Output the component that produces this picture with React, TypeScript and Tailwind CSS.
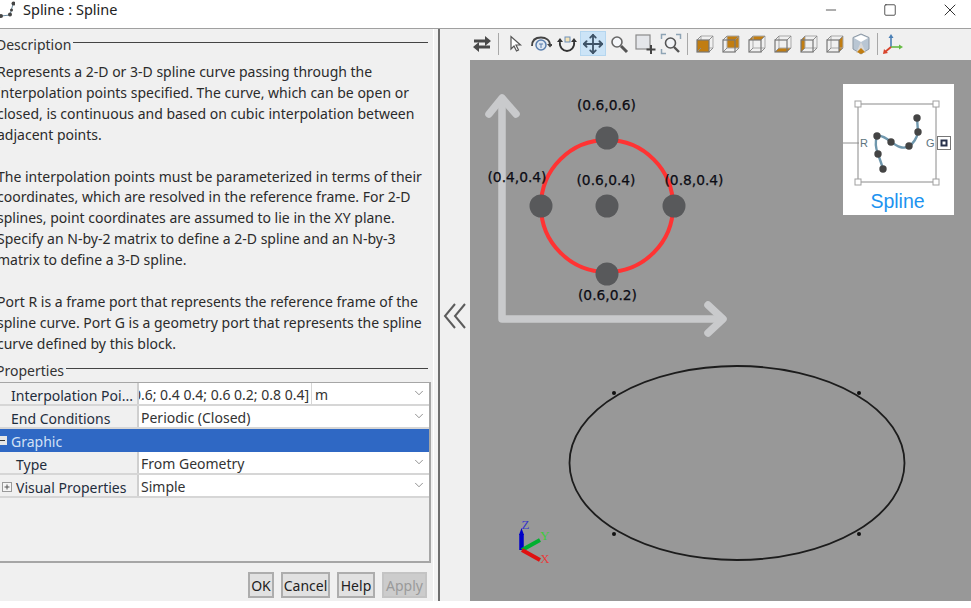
import React from 'react';
import { ChevronDown, Minus, Move, Square, X } from 'lucide-react';

const FONT = "font-['Noto_Sans',sans-serif]";
const ORANGE = '#c17d11';

const Chevron = () => <ChevronDown size={14} strokeWidth={1} className="text-[#444] shrink-0" />;

const SectionHeader = ({ title, mt }: { title: string; mt: string }) => (
  <div className={`flex items-center gap-[2px] h-[20px] -ml-[4px] ${mt}`}>
    <span className="text-[#333] pt-[2px]">{title}</span>
    <div className="flex-1 h-[1px] bg-[#444] -mt-[2px]" />
  </div>
);

const PropRow = ({ label, indent, value, unit, icon }: { label: string; indent: string; value: string; unit?: string; icon?: React.ReactNode }) => (
  <div className="flex h-[23px] border-b-2 border-[#d6d6d6]">
    <div className={`w-[139px] shrink-0 flex items-center pt-[4px] border-r-2 border-[#cfcfcf] text-[#1f2d3d] ${indent}`}>
      {icon}
      <span className="whitespace-nowrap">{label}</span>
    </div>
    <div className="flex-1 min-w-0 bg-white flex items-center text-[#333]">
      {unit ? (
        <>
          <div className="w-[173px] pl-[2px] pr-[2px] pt-[3px] flex justify-end overflow-hidden whitespace-nowrap border-r border-[#d6d6d6] h-full items-center">{value}</div>
          <span className="flex-1 pl-[3px] pt-[3px]">{unit}</span>
        </>
      ) : (
        <span className="flex-1 pl-[2px] pt-[3px]">{value}</span>
      )}
      <div className="pr-[3px]"><Chevron /></div>
    </div>
  </div>
);

const DlgButton = ({ label, w, disabled }: { label: string; w: string; disabled?: boolean }) => (
  <div className={`h-[26px] ${w} pt-[2px] flex items-center justify-center border-2 ${disabled ? 'bg-[#cccccc] border-[#c4c4c4] text-[#9a9a9a]' : 'bg-[#e1e1e1] border-[#adadad] text-[#222]'}`}>
    {label}
  </div>
);

const Cube = ({ face }: { face: string }) => (
  <svg width="20" height="20" viewBox="0 0 20 20" fill="none">
    {face === 'back' && <rect x="6" y="2" width="12" height="12" fill={ORANGE} />}
    {face === 'top' && <path d="M2 6 6 2H18L14 6Z" fill={ORANGE} />}
    {face === 'bottom' && <path d="M2 18 6 14H18L14 18Z" fill={ORANGE} />}
    {face === 'left' && <path d="M2 6 6 2V14L2 18Z" fill={ORANGE} />}
    {face === 'right' && <path d="M14 6 18 2V14L14 18Z" fill={ORANGE} />}
    <path d="M6 2H18V14M6 2V14H18" stroke="#a9a9a9" strokeWidth="1" />
    {face === 'front' && <rect x="2" y="6" width="12" height="12" fill={ORANGE} />}
    <path d="M2 6 6 2M14 6 18 2M14 18 18 14M2 18 6 14" stroke="#8d8d8d" strokeWidth="1" />
    <rect x="2" y="6" width="12" height="12" stroke="#777" strokeWidth="1.2" />
  </svg>
);

const ToolSlot = ({ children, active }: { children: React.ReactNode; active?: boolean }) => (
  <div className={`w-[26px] h-[25px] flex items-center justify-center shrink-0 ${active ? 'bg-[#cce4f7] border border-[#b5d6ef]' : ''}`}>{children}</div>
);

const Sep = () => <div className="w-[1px] h-[22px] bg-[#a8a8a8] shrink-0" />;

const Toolbar = () => (
  <div className="h-[31px] pb-[2px] flex items-center pl-[29px] bg-[#f0f0f0] shrink-0">
    <ToolSlot>
      <svg width="20" height="20" viewBox="0 0 20 20" fill="#4a4a4a">
        <path d="M2 5.5h11V2l6 5-6 5V8.500H2Z" />
        <path d="M18 11.500H7V8L1 13l6 5v-3.500h11Z" />
      </svg>
    </ToolSlot>
    <div className="w-[3px]" />
    <Sep />
    <div className="w-[3px]" />
    <ToolSlot>
      <svg width="18" height="18" viewBox="0 0 18 18" fill="#fff" stroke="#555" strokeWidth="1.2">
        <path d="M5 1.500V14L8 11l2.500 5 2-1L10 10h4.500Z" />
      </svg>
    </ToolSlot>
    <ToolSlot>
      <svg width="22" height="20" viewBox="0 0 22 20" fill="none">
        <path d="M2 12C2 6 6 3.500 11 3.500S20 6 20 11" stroke="#444" strokeWidth="1.800" />
        <path d="M17 10h6l-3 3.500Z" fill="#444" />
        <circle cx="11" cy="11" r="5" stroke="#5a7fae" strokeWidth="1.500" fill="#dfe8f3" />
        <path d="M9 10h4M11 10v4" stroke="#5a7fae" strokeWidth="1" />
      </svg>
    </ToolSlot>
    <ToolSlot>
      <svg width="22" height="20" viewBox="0 0 22 20" fill="none">
        <path d="M4 8C3 13 7 17 11 17s8-4 7-9" stroke="#333" strokeWidth="1.800" />
        <path d="M1 8h6L4 4Z M15 8h6l-3-4Z" fill="#333" />
        <rect x="9" y="3" width="5" height="5" fill="#f4e2b5" stroke="#6d8fba" strokeWidth="1" />
      </svg>
    </ToolSlot>
    <ToolSlot active>
      <Move size={22} strokeWidth={2} className="text-[#3f5468]" />
    </ToolSlot>
    <ToolSlot>
      <svg width="20" height="20" viewBox="0 0 20 20" fill="none">
        <circle cx="8" cy="8" r="5" fill="#f5f7fa" stroke="#666" strokeWidth="1.600" />
        <path d="M12 12l6 6" stroke="#555" strokeWidth="3" />
      </svg>
    </ToolSlot>
    <ToolSlot>
      <svg width="22" height="22" viewBox="0 0 22 22" fill="none">
        <rect x="2" y="2" width="14" height="14" fill="#e4e6ea" stroke="#8a8a8a" strokeWidth="1.200" />
        <path d="M17 12v9M12.500 16.500h9" stroke="#444" strokeWidth="2" />
      </svg>
    </ToolSlot>
    <ToolSlot>
      <svg width="22" height="22" viewBox="0 0 22 22" fill="none">
        <circle cx="10.500" cy="10" r="5" fill="#f2f4f7" stroke="#555" strokeWidth="1.600" />
        <path d="M14 14l5 5" stroke="#555" strokeWidth="2.400" />
        <path d="M1.500 6V1.500H6M16 1.500h4.500V6M1.500 16v4.500H6" stroke="#8ea4b5" strokeWidth="1.500" />
      </svg>
    </ToolSlot>
    <div className="w-[3px]" />
    <Sep />
    <div className="w-[4px]" />
    {['front', 'back', 'top', 'bottom', 'left', 'right'].map(face => (
      <ToolSlot key={face}><Cube face={face} /></ToolSlot>
    ))}
    <ToolSlot>
      <svg width="20" height="22" viewBox="0 0 20 22" fill="none">
        <path d="M10 1 18 4.500V16L10 21 2 16V4.500Z" fill="#b9c6d3" stroke="#8d99a5" strokeWidth="1" />
        <path d="M10 2 17 5 10 9 3 5Z" fill="#fff" />
        <path d="M10 9 5 20H15Z" fill="#d8d8d8" />
        <path d="M10 15 6 19 10 21 14 19Z" fill={ORANGE} />
      </svg>
    </ToolSlot>
    <div className="w-[3px]" />
    <Sep />
    <div className="w-[2px]" />
    <ToolSlot>
      <svg width="22" height="22" viewBox="0 0 22 22" fill="none">
        <path d="M9 14V4" stroke="#4a7fb5" strokeWidth="1.600" />
        <path d="M9 1 6.500 5h5Z" fill="#4a7fb5" />
        <path d="M9 14H18" stroke="#66bb44" strokeWidth="1.600" />
        <path d="M21 14 17 11.500v5Z" fill="#66bb44" />
        <path d="M9 14 3 19" stroke="#d8442c" strokeWidth="1.800" />
        <path d="M1 21 2 16 6 20Z" fill="#d8442c" />
      </svg>
    </ToolSlot>
  </div>
);

const SceneDrawing = () => (
  <svg className="block w-full h-full" viewBox="470 60 501 541" fill="none">
    {/* white reference axes */}
    <g stroke="#c9cacc" strokeWidth="7.500" strokeLinecap="round" strokeLinejoin="round">
      <path d="M502 100V319H722" />
      <path d="M489 114 502 98 516 114" />
      <path d="M708 305 723 319 708 333" />
    </g>
    <circle cx="607" cy="206" r="66" stroke="#ff3333" strokeWidth="4" />
    <g fill="#58595b">
      <circle cx="607" cy="138" r="11.500" />
      <circle cx="541" cy="206" r="11.500" />
      <circle cx="607" cy="206" r="11.500" />
      <circle cx="674" cy="206" r="11.500" />
      <circle cx="607" cy="274" r="11.500" />
    </g>
    <g fill="#0c0c14" fontFamily="'DejaVu Sans', sans-serif" fontSize="13.800" textAnchor="middle" stroke="#0c0c14" strokeWidth="0.250">
      <text x="606.500" y="110">(0.6,0.6)</text>
      <text x="517" y="182">(0.4,0.4)</text>
      <text x="606" y="185">(0.6,0.4)</text>
      <text x="694" y="185">(0.8,0.4)</text>
      <text x="607.500" y="300">(0.6,0.2)</text>
    </g>
    {/* spline result */}
    <ellipse cx="737" cy="463" rx="167.500" ry="97" stroke="#1c1c1c" strokeWidth="1.800" />
    <g fill="#111">
      <circle cx="614" cy="393" r="2" />
      <circle cx="859" cy="393" r="2" />
      <circle cx="614" cy="534" r="2" />
      <circle cx="859" cy="534" r="2" />
    </g>
    {/* triad */}
    <path d="M521.500 550V534" stroke="#0000c8" strokeWidth="4.500" />
    <path d="M521.500 528 519 535h5Z" fill="#0000c8" />
    <path d="M522 550 540 540" stroke="#00b030" strokeWidth="4" />
    <path d="M522 550 540 560" stroke="#e01010" strokeWidth="4" />
    <g fontFamily="'Liberation Serif', serif" fontSize="13" textAnchor="middle">
      <text x="525.500" y="529" fill="#3838c8">Z</text>
      <text x="545" y="540" fill="#3ccc3c">Y</text>
      <text x="545" y="563" fill="#e83c3c">X</text>
    </g>
  </svg>
);

const BlockThumb = () => (
  <div className="absolute left-[373px] top-[24px] w-[111px] h-[131px] bg-white flex flex-col items-center">
    <svg width="111" height="104" viewBox="843 84 111 104" fill="none">
      <path d="M843 143H859" stroke="#909090" strokeWidth="1" />
      <rect x="858" y="104" width="78" height="78" stroke="#8a8a8a" strokeWidth="1" />
      <g fill="#fff" stroke="#a0a0a0" strokeWidth="1">
        <rect x="855" y="101" width="6" height="6" />
        <rect x="933" y="101" width="6" height="6" />
        <rect x="855" y="179" width="6" height="6" />
        <rect x="933" y="179" width="6" height="6" />
      </g>
      <path d="M917 118 918 132C917 138 913 144 909 146 903 150 897 146 891 142 886 138 881 135 877 136 875 142 876 149 878 154 880 160 882 165 883 169" stroke="#6f97ad" strokeWidth="2.400" />
      <g fill="#444">
        <circle cx="917" cy="118" r="3.700" />
        <circle cx="918" cy="132" r="3.700" />
        <circle cx="909" cy="146" r="3.700" />
        <circle cx="891" cy="142" r="3.700" />
        <circle cx="877" cy="136" r="3.700" />
        <circle cx="878" cy="154" r="3.700" />
        <circle cx="883" cy="169" r="3.700" />
      </g>
      <g fontFamily="'Liberation Sans', sans-serif" fontSize="11" fill="#5d7480">
        <text x="860" y="147">R</text>
        <text x="926" y="147">G</text>
      </g>
      <rect x="937.500" y="136.500" width="13" height="13" fill="#fff" stroke="#777" strokeWidth="1" />
      <rect x="941.500" y="140.500" width="5" height="5" fill="#fff" stroke="#26304a" strokeWidth="2" />
    </svg>
    <div className="text-[19.5px] leading-[26px] -ml-[2px] text-[#1c93f0] font-['Liberation_Sans',sans-serif]">Spline</div>
  </div>
);

export default function App() {
  return (
    <div className={`w-[971px] h-[608px] overflow-hidden bg-white flex flex-col text-[14px] ${FONT}`}>
      {/* title bar */}
      <div className="h-[28px] pb-[8px] shrink-0 flex items-center relative">
        <svg width="16" height="18" viewBox="0 0 16 18" fill="none" className="shrink-0 -ml-[1px]">
          <path d="M2 15 11 14 14 3" stroke="#6a8ba0" strokeWidth="1" />
          <g fill="#444">
            <circle cx="2" cy="15" r="2" />
            <circle cx="11" cy="13.500" r="2" />
            <circle cx="12.500" cy="9" r="1.500" />
            <circle cx="14.500" cy="2.500" r="2" />
          </g>
        </svg>
        <span className="ml-[8px] text-[14.5px] text-[#222]">Spline : Spline</span>
        <div className="ml-auto flex items-center text-[#333]">
          <Minus size={16} strokeWidth={1.200} className="mr-[44px]" />
          <Square size={14} strokeWidth={1.400} className="mr-[43px]" />
          <X size={20} strokeWidth={1.200} className="mr-[11px]" />
        </div>
      </div>
      <div className="h-[1px] bg-[#a0a0a0] shrink-0" />

      <div className="h-[572px] shrink-0 flex">
        {/* block dialog */}
        <div className="w-[434px] shrink-0 bg-[#f0f0f0] border-r border-white pt-[4px] pr-[5px] flex flex-col">
          <SectionHeader title="Description" mt="" />
          <p className="mt-[9px] -ml-[3px] leading-[20.900px] whitespace-nowrap text-[#2b2b2b]">
            Represents a 2-D or 3-D spline curve passing through the<br />
            interpolation points specified. The curve, which can be open or<br />
            closed, is continuous and based on cubic interpolation between<br />
            adjacent points.<br />
            <br />
            The interpolation points must be parameterized in terms of their<br />
            coordinates, which are resolved in the reference frame. For 2-D<br />
            splines, point coordinates are assumed to lie in the XY plane.<br />
            Specify an N-by-2 matrix to define a 2-D spline and an N-by-3<br />
            matrix to define a 3-D spline.<br />
            <br />
            Port R is a frame port that represents the reference frame of the<br />
            spline curve. Port G is a geometry port that represents the spline<br />
            curve defined by this block.
          </p>
          <SectionHeader title="Properties" mt="mt-[5px]" />
          <div className="mt-[2px] h-[181px] -mr-[3px] border-t border-r-2 border-b-2 border-[#a6a6a6]">
            <PropRow label="Interpolation Poi..." indent="pl-[11px]" value="0.6; 0.4 0.4; 0.6 0.2; 0.8 0.4]" unit="m" />
            <PropRow label="End Conditions" indent="pl-[11px]" value="Periodic (Closed)" />
            <div className="h-[23px] bg-[#2f68c4] flex items-center text-[#d3e1f5] relative">
              <div className="w-[7px] h-[9px] bg-[#e6e6e6] flex items-center"><div className="w-[5px] h-[1px] bg-[#333]" /></div>
              <span className="ml-[4px] pt-[2px]">Graphic</span>
            </div>
            <PropRow label="Type" indent="pl-[16px]" value="From Geometry" />
            <PropRow
              label="Visual Properties"
              indent="pl-[2px]"
              value="Simple"
              icon={
                <svg width="14" height="10" viewBox="0 0 14 10" fill="none" className="shrink-0">
                  <rect x="0.500" y="0.500" width="9" height="9" fill="#f5f5f5" stroke="#9a9a9a" />
                  <path d="M2.500 5h5M5 2.500v5" stroke="#555" />
                </svg>
              }
            />
          </div>
          <div className="mt-[9px] flex justify-end gap-[7px] mr-[1px]">
            <DlgButton label="OK" w="w-[26px]" />
            <DlgButton label="Cancel" w="w-[49px]" />
            <DlgButton label="Help" w="w-[38px]" />
            <DlgButton label="Apply" w="w-[45px]" disabled />
          </div>
        </div>
        <div className="w-[4px] shrink-0 bg-[#f3f3f3]" />
        <div className="w-[2px] shrink-0 bg-[#6f6f6f]" />

        {/* mechanics explorer side */}
        <div className="flex-1 min-w-0 flex flex-col">
          <Toolbar />
          <div className="flex-1 min-h-0 flex">
            <div className="w-[30px] shrink-0 bg-[#f0f0f0] flex items-center justify-center pb-[26px]">
              <svg width="24" height="30" viewBox="0 0 24 30" fill="none" stroke="#5c5c5c" strokeWidth="2" className="mt-[-3px]">
                <path d="M12 3 2 15 12 27M22 3 12 15 22 27" />
              </svg>
            </div>
            <div className="flex-1 min-w-0 relative bg-[#989898]">
              <SceneDrawing />
              <BlockThumb />
            </div>
          </div>
        </div>
      </div>
    </div>
  );
}
